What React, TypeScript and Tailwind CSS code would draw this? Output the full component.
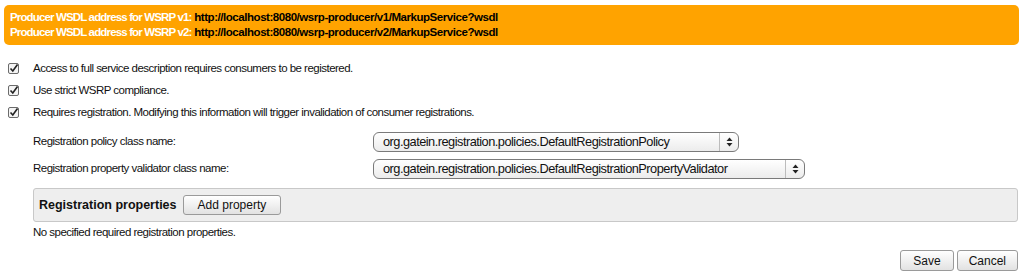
const font = { fontFamily: '"Liberation Sans", Arial, sans-serif' };

function Check() {
  return (
    <svg width="11" height="11" viewBox="0 0 11 11" className="shrink-0">
      <rect x="0.5" y="0.5" width="10" height="10" rx="1.5" fill="#f4f4f4" stroke="#6b6b6b" />
      <path d="M2.5 5.5 L4.8 8 L9.5 1.5" fill="none" stroke="#222" strokeWidth="1.6" />
    </svg>
  );
}

function Select({ value, width }: { value: string; width: string }) {
  return (
    <div className={`flex h-[20px] items-stretch rounded-[6px] border border-[#7a7a7a] bg-gradient-to-b from-white to-[#ececec] text-[12.8px] text-[#111] ${width}`}>
      <div className="flex flex-1 items-center pl-[9px]">{value}</div>
      <div className="flex w-[19px] items-center justify-center border-l border-[#bcbcbc]">
        <svg width="7" height="10" viewBox="0 0 7 10">
          <path d="M3.5 0.5 L6.5 4 L0.5 4 Z" fill="#222" />
          <path d="M3.5 9.5 L6.5 6 L0.5 6 Z" fill="#222" />
        </svg>
      </div>
    </div>
  );
}

function Button({ children, className = "" }: { children: React.ReactNode; className?: string }) {
  return (
    <button className={`rounded-[3px] border border-[#9a9a9a] bg-gradient-to-b from-white to-[#e2e2e2] text-[12px] text-[#111] ${className}`}>
      {children}
    </button>
  );
}

export default function App() {
  const rows = [
    "Access to full service description requires consumers to be registered.",
    "Use strict WSRP compliance.",
    "Requires registration. Modifying this information will trigger invalidation of consumer registrations.",
  ];
  return (
    <div className="h-[277px] w-[1025px] bg-white text-[11.5px] tracking-[-0.52px] text-[#111]" style={font}>
      <div className="pl-[4px] pr-[6px] pt-[5px]">
        <div className="rounded-[5px] bg-[#ffa300] px-[6px] py-[5px] text-[11.5px] font-bold leading-[15px]">
          <div>
            <span className="tracking-[-0.85px] text-white">Producer WSDL address for WSRP v1:</span>{" "}
            <span className="tracking-[-0.45px] text-black">http://localhost:8080/wsrp-producer/v1/MarkupService?wsdl</span>
          </div>
          <div>
            <span className="tracking-[-0.85px] text-white">Producer WSDL address for WSRP v2:</span>{" "}
            <span className="tracking-[-0.45px] text-black">http://localhost:8080/wsrp-producer/v2/MarkupService?wsdl</span>
          </div>
        </div>
      </div>

      <div className="mt-[17px] flex flex-col gap-[10px] pl-[8px]">
        {rows.map((r) => (
          <div key={r} className="flex items-center gap-[14px] leading-[12px]">
            <Check />
            <span>{r}</span>
          </div>
        ))}
      </div>

      <div className="mt-[14px] flex flex-col gap-[7px] pl-[33px]">
        <div className="flex items-center">
          <span className="w-[340px]">Registration policy class name:</span>
          <Select width="w-[366px]" value="org.gatein.registration.policies.DefaultRegistrationPolicy" />
        </div>
        <div className="flex items-center">
          <span className="w-[340px]">Registration property validator class name:</span>
          <Select width="w-[432px]" value="org.gatein.registration.policies.DefaultRegistrationPropertyValidator" />
        </div>
      </div>

      <div className="ml-[33px] mr-[7px] mt-[9px] flex items-center gap-[6px] rounded-[3px] border border-[#c8c8c8] bg-[#eeeeee] px-[5px] py-[6px]">
        <span className="text-[12.5px] font-bold tracking-normal">Registration properties</span>
        <Button className="h-[20px] px-[14px] tracking-normal">Add property</Button>
      </div>

      <div className="ml-[33px] mt-[2px] leading-[16px]">No specified required registration properties.</div>

      <div className="mt-[10px] flex justify-end gap-[3px] pr-[7px]">
        <Button className="h-[21px] px-[12px] tracking-normal">Save</Button>
        <Button className="h-[21px] px-[11px] tracking-normal">Cancel</Button>
      </div>
    </div>
  );
}
